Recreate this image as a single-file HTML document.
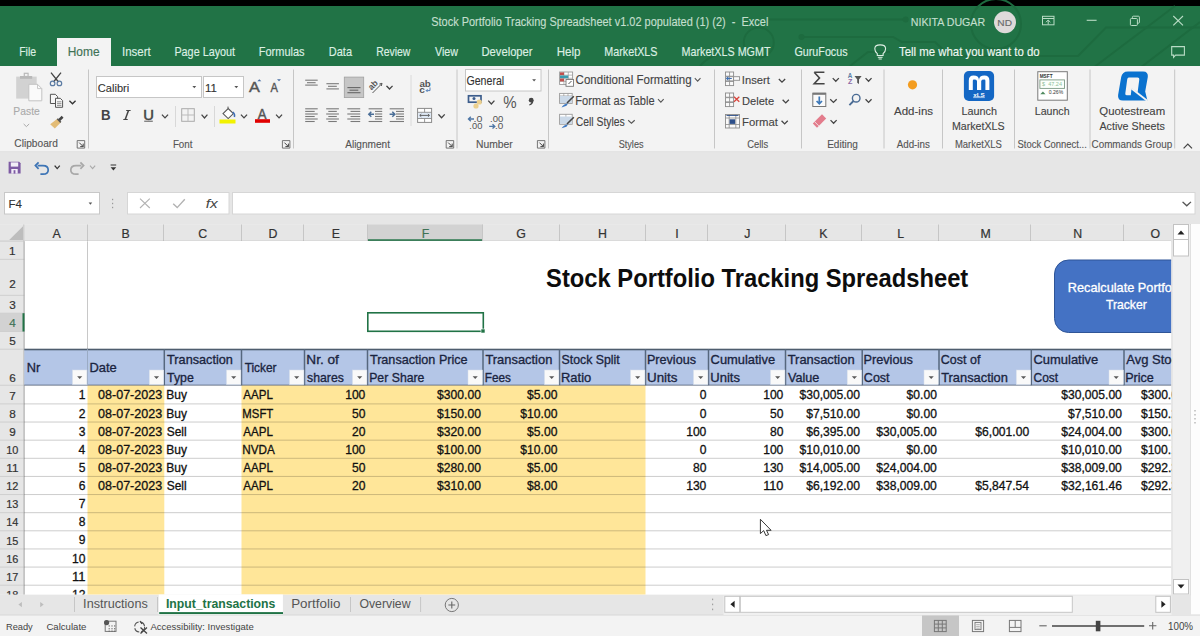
<!DOCTYPE html>
<html><head><meta charset="utf-8"><title>Excel</title>
<style>
html,body{margin:0;padding:0;width:1200px;height:636px;overflow:hidden;background:#f3f3f3}
svg{position:absolute;left:0;top:0;display:block}
text{font-family:"Liberation Sans",sans-serif;white-space:pre}
</style></head><body>
<svg width="1200" height="636" viewBox="0 0 1200 636">
<rect x="0" y="0" width="1200" height="6" fill="#000"/>
<rect x="0" y="6" width="1200" height="60" fill="#217346"/>
<g stroke="#1d6b3f" stroke-width="2" fill="none">
<path d="M769 19.6 H903" fill="none" stroke="#1d6b3f" stroke-width="2"/>
<path d="M803 36.9 H893 L902 42 H935 L950 56 H1040" fill="none" stroke="#1d6b3f" stroke-width="2"/>
<path d="M1040 56 H1078 L1106 27.6 H1200" fill="none" stroke="#1d6b3f" stroke-width="2"/>
<path d="M1093 68 L1175 6" fill="none" stroke="#1d6b3f" stroke-width="2"/>
<path d="M1140 68 L1200 22" fill="none" stroke="#1d6b3f" stroke-width="2"/>
<path d="M700 66 Q712 52 735 52" fill="none" stroke="#1d6b3f" stroke-width="2"/>
<path d="M850 66 L868 52 H890" fill="none" stroke="#1d6b3f" stroke-width="2"/>
<circle cx="758.75" cy="42.5" r="15"/>
<circle cx="996" cy="24" r="25"/>
</g>
<circle cx="905.6" cy="19.6" r="3" fill="#1d6b3f"/>
<circle cx="801.5" cy="36.9" r="3" fill="#1d6b3f"/>
<rect x="57" y="38" width="54" height="28" fill="#f3f3f3"/>
<rect x="0" y="66" width="1200" height="86" fill="#f3f3f3"/>
<rect x="0" y="151.5" width="1200" height="1" fill="#d5d5d5"/>
<rect x="0" y="152.5" width="1200" height="72" fill="#e6e6e6"/>
<rect x="4.5" y="192.5" width="95" height="21.5" fill="#fff" stroke="#c8c8c8" stroke-width="1"/>
<rect x="127.5" y="192.5" width="101.5" height="21.5" fill="#fff" stroke="#d6d6d6" stroke-width="1"/>
<rect x="232.5" y="192.5" width="962.5" height="21.5" fill="#fff" stroke="#d6d6d6" stroke-width="1"/>
<rect x="1190.5" y="224" width="9.5" height="391" fill="#fdfdfd"/>
<line x1="1190.5" y1="224" x2="1190.5" y2="615" stroke="#d0d0d0" stroke-width="1"/>
<rect x="0" y="594.5" width="1190.5" height="20.5" fill="#e6e6e6"/>
<rect x="0" y="615" width="1200" height="21" fill="#f3f3f3"/>
<line x1="0" y1="615" x2="1200" y2="615" stroke="#d8d8d8" stroke-width="1"/>
<rect x="0" y="224.5" width="1171.5" height="16.80000000000001" fill="#e6e6e6"/>
<rect x="367.5" y="224.5" width="115.5" height="16.80000000000001" fill="#d2d2d2"/>
<rect x="367.5" y="239.3" width="115.5" height="2" fill="#217346"/>
<line x1="87.5" y1="224.5" x2="87.5" y2="241.3" stroke="#c6c6c6" stroke-width="1"/>
<line x1="163.5" y1="224.5" x2="163.5" y2="241.3" stroke="#c6c6c6" stroke-width="1"/>
<line x1="241.5" y1="224.5" x2="241.5" y2="241.3" stroke="#c6c6c6" stroke-width="1"/>
<line x1="303.5" y1="224.5" x2="303.5" y2="241.3" stroke="#c6c6c6" stroke-width="1"/>
<line x1="367.5" y1="224.5" x2="367.5" y2="241.3" stroke="#c6c6c6" stroke-width="1"/>
<line x1="482.5" y1="224.5" x2="482.5" y2="241.3" stroke="#c6c6c6" stroke-width="1"/>
<line x1="559.5" y1="224.5" x2="559.5" y2="241.3" stroke="#c6c6c6" stroke-width="1"/>
<line x1="645.5" y1="224.5" x2="645.5" y2="241.3" stroke="#c6c6c6" stroke-width="1"/>
<line x1="707.5" y1="224.5" x2="707.5" y2="241.3" stroke="#c6c6c6" stroke-width="1"/>
<line x1="785.5" y1="224.5" x2="785.5" y2="241.3" stroke="#c6c6c6" stroke-width="1"/>
<line x1="861.5" y1="224.5" x2="861.5" y2="241.3" stroke="#c6c6c6" stroke-width="1"/>
<line x1="938.5" y1="224.5" x2="938.5" y2="241.3" stroke="#c6c6c6" stroke-width="1"/>
<line x1="1030.5" y1="224.5" x2="1030.5" y2="241.3" stroke="#c6c6c6" stroke-width="1"/>
<line x1="1123.5" y1="224.5" x2="1123.5" y2="241.3" stroke="#c6c6c6" stroke-width="1"/>
<rect x="0" y="240.8" width="1171.5" height="1.1" fill="#ababab"/>
<path d="M23 226.2 L23 240 L9.2 240 Z" fill="#bdbdbd" stroke="none" stroke-width="1"/>
<line x1="23.8" y1="224.5" x2="23.8" y2="241.3" stroke="#c6c6c6" stroke-width="1"/>
<rect x="0" y="241.3" width="24.3" height="353.2" fill="#e6e6e6"/>
<rect x="24.3" y="241" width="1147.2" height="353.5" fill="#ffffff"/>
<rect x="0" y="313.2" width="24.3" height="18.30000000000001" fill="#d2d2d2"/>
<rect x="0" y="258.8" width="24.3" height="1" fill="#cfcfcf"/>
<rect x="0" y="294.8" width="24.3" height="1" fill="#cfcfcf"/>
<rect x="0" y="312.7" width="24.3" height="1" fill="#cfcfcf"/>
<rect x="0" y="331.0" width="24.3" height="1" fill="#cfcfcf"/>
<rect x="0" y="348.7" width="24.3" height="1" fill="#cfcfcf"/>
<rect x="0" y="384.75" width="24.3" height="1" fill="#cfcfcf"/>
<rect x="0" y="403.4" width="24.3" height="1" fill="#cfcfcf"/>
<rect x="0" y="421.53" width="24.3" height="1" fill="#cfcfcf"/>
<rect x="0" y="439.65999999999997" width="24.3" height="1" fill="#cfcfcf"/>
<rect x="0" y="457.78999999999996" width="24.3" height="1" fill="#cfcfcf"/>
<rect x="0" y="475.91999999999996" width="24.3" height="1" fill="#cfcfcf"/>
<rect x="0" y="494.04999999999995" width="24.3" height="1" fill="#cfcfcf"/>
<rect x="0" y="512.18" width="24.3" height="1" fill="#cfcfcf"/>
<rect x="0" y="530.31" width="24.3" height="1" fill="#cfcfcf"/>
<rect x="0" y="548.4399999999999" width="24.3" height="1" fill="#cfcfcf"/>
<rect x="0" y="566.5699999999999" width="24.3" height="1" fill="#cfcfcf"/>
<rect x="0" y="584.6999999999999" width="24.3" height="1" fill="#cfcfcf"/>
<rect x="23.6" y="241.3" width="1" height="353.2" fill="#a3a3a3"/>
<rect x="22.5" y="313.2" width="2" height="18.30000000000001" fill="#217346"/>
<line x1="87.5" y1="241.3" x2="87.5" y2="349.2" stroke="#c8c8c8" stroke-width="1"/>
<rect x="24.3" y="349.2" width="1147.2" height="36.05000000000001" fill="#b4c6e7"/>
<rect x="87.5" y="385.25" width="76.80000000000001" height="209.25" fill="#ffe699"/>
<rect x="241.5" y="385.25" width="404.0" height="209.25" fill="#ffe699"/>
<rect x="24.3" y="403.4" width="1147.2" height="1" fill="rgba(0,0,0,0.2)"/>
<rect x="24.3" y="421.53" width="1147.2" height="1" fill="rgba(0,0,0,0.2)"/>
<rect x="24.3" y="439.65999999999997" width="1147.2" height="1" fill="rgba(0,0,0,0.2)"/>
<rect x="24.3" y="457.78999999999996" width="1147.2" height="1" fill="rgba(0,0,0,0.2)"/>
<rect x="24.3" y="475.91999999999996" width="1147.2" height="1" fill="rgba(0,0,0,0.2)"/>
<rect x="24.3" y="494.04999999999995" width="1147.2" height="1" fill="rgba(0,0,0,0.2)"/>
<rect x="24.3" y="512.18" width="1147.2" height="1" fill="rgba(0,0,0,0.2)"/>
<rect x="24.3" y="530.31" width="1147.2" height="1" fill="rgba(0,0,0,0.2)"/>
<rect x="24.3" y="548.4399999999999" width="1147.2" height="1" fill="rgba(0,0,0,0.2)"/>
<rect x="24.3" y="566.5699999999999" width="1147.2" height="1" fill="rgba(0,0,0,0.2)"/>
<rect x="24.3" y="584.6999999999999" width="1147.2" height="1" fill="rgba(0,0,0,0.2)"/>
<rect x="24.3" y="384.55" width="1147.2" height="1.2" fill="rgba(60,70,90,0.55)"/>
<rect x="24.3" y="348.7" width="1147.2" height="1.6" fill="#4e5d6e"/>
<line x1="87.5" y1="349.2" x2="87.5" y2="385.25" stroke="#9aabc4" stroke-width="1.0"/>
<line x1="164.3" y1="349.2" x2="164.3" y2="385.25" stroke="#56677e" stroke-width="1.5"/>
<line x1="241.5" y1="349.2" x2="241.5" y2="385.25" stroke="#56677e" stroke-width="1.5"/>
<line x1="304.5" y1="349.2" x2="304.5" y2="385.25" stroke="#56677e" stroke-width="1.5"/>
<line x1="367.5" y1="349.2" x2="367.5" y2="385.25" stroke="#56677e" stroke-width="1.5"/>
<line x1="483" y1="349.2" x2="483" y2="385.25" stroke="#56677e" stroke-width="1.5"/>
<line x1="559.5" y1="349.2" x2="559.5" y2="385.25" stroke="#56677e" stroke-width="1.5"/>
<line x1="645.5" y1="349.2" x2="645.5" y2="385.25" stroke="#56677e" stroke-width="1.5"/>
<line x1="708.5" y1="349.2" x2="708.5" y2="385.25" stroke="#56677e" stroke-width="1.5"/>
<line x1="785.5" y1="349.2" x2="785.5" y2="385.25" stroke="#56677e" stroke-width="1.5"/>
<line x1="862.2" y1="349.2" x2="862.2" y2="385.25" stroke="#56677e" stroke-width="1.5"/>
<line x1="939" y1="349.2" x2="939" y2="385.25" stroke="#56677e" stroke-width="1.5"/>
<line x1="1031.3" y1="349.2" x2="1031.3" y2="385.25" stroke="#56677e" stroke-width="1.5"/>
<line x1="1124" y1="349.2" x2="1124" y2="385.25" stroke="#56677e" stroke-width="1.5"/>
<rect x="72.5" y="370" width="14.4" height="14.5" fill="#f9f9f9" stroke="#d5dde9" stroke-width="0.5"/>
<path d="M77.10000000000001 376.2 L82.3 376.2 L79.7 379 Z" fill="#595959" stroke="none" stroke-width="1"/>
<rect x="149.3" y="370" width="14.4" height="14.5" fill="#f9f9f9" stroke="#d5dde9" stroke-width="0.5"/>
<path d="M153.9 376.2 L159.1 376.2 L156.5 379 Z" fill="#595959" stroke="none" stroke-width="1"/>
<rect x="226.5" y="370" width="14.4" height="14.5" fill="#f9f9f9" stroke="#d5dde9" stroke-width="0.5"/>
<path d="M231.1 376.2 L236.29999999999998 376.2 L233.7 379 Z" fill="#595959" stroke="none" stroke-width="1"/>
<rect x="289.5" y="370" width="14.4" height="14.5" fill="#f9f9f9" stroke="#d5dde9" stroke-width="0.5"/>
<path d="M294.09999999999997 376.2 L299.3 376.2 L296.7 379 Z" fill="#595959" stroke="none" stroke-width="1"/>
<rect x="352.5" y="370" width="14.4" height="14.5" fill="#f9f9f9" stroke="#d5dde9" stroke-width="0.5"/>
<path d="M357.09999999999997 376.2 L362.3 376.2 L359.7 379 Z" fill="#595959" stroke="none" stroke-width="1"/>
<rect x="468.0" y="370" width="14.4" height="14.5" fill="#f9f9f9" stroke="#d5dde9" stroke-width="0.5"/>
<path d="M472.59999999999997 376.2 L477.8 376.2 L475.2 379 Z" fill="#595959" stroke="none" stroke-width="1"/>
<rect x="544.5" y="370" width="14.4" height="14.5" fill="#f9f9f9" stroke="#d5dde9" stroke-width="0.5"/>
<path d="M549.1 376.2 L554.3000000000001 376.2 L551.7 379 Z" fill="#595959" stroke="none" stroke-width="1"/>
<rect x="630.5" y="370" width="14.4" height="14.5" fill="#f9f9f9" stroke="#d5dde9" stroke-width="0.5"/>
<path d="M635.1 376.2 L640.3000000000001 376.2 L637.7 379 Z" fill="#595959" stroke="none" stroke-width="1"/>
<rect x="693.5" y="370" width="14.4" height="14.5" fill="#f9f9f9" stroke="#d5dde9" stroke-width="0.5"/>
<path d="M698.1 376.2 L703.3000000000001 376.2 L700.7 379 Z" fill="#595959" stroke="none" stroke-width="1"/>
<rect x="770.5" y="370" width="14.4" height="14.5" fill="#f9f9f9" stroke="#d5dde9" stroke-width="0.5"/>
<path d="M775.1 376.2 L780.3000000000001 376.2 L777.7 379 Z" fill="#595959" stroke="none" stroke-width="1"/>
<rect x="847.2" y="370" width="14.4" height="14.5" fill="#f9f9f9" stroke="#d5dde9" stroke-width="0.5"/>
<path d="M851.8000000000001 376.2 L857.0000000000001 376.2 L854.4000000000001 379 Z" fill="#595959" stroke="none" stroke-width="1"/>
<rect x="924.0" y="370" width="14.4" height="14.5" fill="#f9f9f9" stroke="#d5dde9" stroke-width="0.5"/>
<path d="M928.6 376.2 L933.8000000000001 376.2 L931.2 379 Z" fill="#595959" stroke="none" stroke-width="1"/>
<rect x="1016.3000000000001" y="370" width="14.4" height="14.5" fill="#f9f9f9" stroke="#d5dde9" stroke-width="0.5"/>
<path d="M1020.9000000000001 376.2 L1026.1000000000001 376.2 L1023.5000000000001 379 Z" fill="#595959" stroke="none" stroke-width="1"/>
<rect x="1109.0" y="370" width="14.4" height="14.5" fill="#f9f9f9" stroke="#d5dde9" stroke-width="0.5"/>
<path d="M1113.6000000000001 376.2 L1118.8 376.2 L1116.2 379 Z" fill="#595959" stroke="none" stroke-width="1"/>
<rect x="367.8" y="312.8" width="115.5" height="18.5" fill="none" stroke="#217346" stroke-width="1.6"/>
<rect x="481" y="329" width="4" height="4" fill="#217346" stroke="#fff" stroke-width="0.6"/>
<clipPath id="gclip"><rect x="24.3" y="241" width="1147.2" height="353.5"/></clipPath>
<g clip-path="url(#gclip)">
<rect x="1054.5" y="260" width="150" height="72.5" rx="14" ry="14" fill="#4472c4" stroke="#2f5597" stroke-width="1"/>
</g>
<rect x="1171.5" y="224.5" width="19.0" height="370.0" fill="#f0f0f0"/>
<line x1="1172.0" y1="224.5" x2="1172.0" y2="594.5" stroke="#dcdcdc" stroke-width="1"/>
<rect x="1173.5" y="224.5" width="15" height="15" fill="#fff" stroke="#c2c2c2" stroke-width="1"/>
<path d="M1177.5 234.5 L1184.5 234.5 L1181 230.5 Z" fill="#222" stroke="none" stroke-width="1"/>
<rect x="1173.5" y="239.5" width="15" height="16.5" fill="#fff" stroke="#c2c2c2" stroke-width="1"/>
<rect x="1173.5" y="579.5" width="15" height="14.5" fill="#fff" stroke="#c2c2c2" stroke-width="1"/>
<path d="M1177.5 584.5 L1184.5 584.5 L1181 588.5 Z" fill="#222" stroke="none" stroke-width="1"/>
<rect x="1194.5" y="410" width="1" height="1.5" fill="#9a9a9a"/>
<rect x="1194.5" y="414" width="1" height="1.5" fill="#9a9a9a"/>
<rect x="1194.5" y="418" width="1" height="1.5" fill="#9a9a9a"/>
<rect x="1194.5" y="422" width="1" height="1.5" fill="#9a9a9a"/>
<rect x="1042.5" y="16.3" width="11.5" height="8.5" fill="none" stroke="#b9dcc5" stroke-width="1"/>
<line x1="1042.5" y1="18.5" x2="1054" y2="18.5" stroke="#b9dcc5" stroke-width="1"/>
<path d="M1048.2 24.5 V20 M1046 22.2 L1048.2 20 L1050.4 22.2" fill="none" stroke="#b9dcc5" stroke-width="1"/>
<line x1="1086.7" y1="20.3" x2="1096.6" y2="20.3" stroke="#b9dcc5" stroke-width="1.1"/>
<rect x="1130.4" y="18.5" width="7" height="7" fill="none" stroke="#b9dcc5" stroke-width="1" rx="1"/>
<path d="M1132.4 18.5 V17.2 Q1132.4 16.2 1133.4 16.2 H1138.4 Q1139.4 16.2 1139.4 17.2 V22.2 Q1139.4 23.2 1138.4 23.2 H1137.4" fill="none" stroke="#b9dcc5" stroke-width="1"/>
<path d="M1173.3 16 L1183 25.3 M1183 16 L1173.3 25.3" fill="none" stroke="#b9dcc5" stroke-width="1.1"/>
<path d="M877.3 55.5 V53.7 Q874.8 51.5 874.8 48.7 Q874.8 44.9 880.2 44.9 Q885.6 44.9 885.6 48.7 Q885.6 51.5 883.1 53.7 V55.5 Z" fill="none" stroke="#dff0e5" stroke-width="1.1"/>
<line x1="877.8" y1="57.3" x2="882.6" y2="57.3" stroke="#dff0e5" stroke-width="1"/>
<line x1="878.6" y1="59" x2="881.8" y2="59" stroke="#dff0e5" stroke-width="1"/>
<path d="M1171.7 46.6 H1184.4 V55.1 H1175.6 L1173.6 57.3 V55.1 H1171.7 Z" fill="none" stroke="#b9dcc5" stroke-width="1.1"/>
<rect x="16.2" y="76.6" width="20.5" height="22" fill="#d2d2d2"/>
<rect x="20" y="76" width="12.2" height="2.8" fill="#b9b9b9"/>
<rect x="24.3" y="73.3" width="3.8" height="3.2" fill="none" stroke="#b9b9b9" stroke-width="1.2"/>
<path d="M28.8 84.3 H37.5 L41.8 88.6 V100.8 H28.8 Z" fill="#fafafa" stroke="#c4c4c4" stroke-width="1"/>
<path d="M37.5 84.3 V88.6 H41.8" fill="none" stroke="#c4c4c4" stroke-width="0.9"/>
<path d="M24 124.3 L26.4 126.6 L28.8 124.3" fill="none" stroke="#aaa" stroke-width="1" stroke-linecap="square"/>
<path d="M51 72.6 L58.5 82 M61 72.6 L53.5 82" fill="none" stroke="#444" stroke-width="1.3"/>
<circle cx="52.6" cy="83.4" r="2.3" fill="none" stroke="#5b7ba3" stroke-width="1.2"/>
<circle cx="59.4" cy="83.4" r="2.3" fill="none" stroke="#5b7ba3" stroke-width="1.2"/>
<path d="M50.4 94.3 H55.3 L57.6 96.6 V103.5 H50.4 Z" fill="#f6f6f6" stroke="#555" stroke-width="1"/>
<path d="M55.5 98.3 H60.3 L62.6 100.6 V107.3 H55.5 Z" fill="#f6f6f6" stroke="#555" stroke-width="1"/>
<line x1="57" y1="101.8" x2="61.4" y2="101.8" stroke="#777" stroke-width="0.8"/>
<line x1="57" y1="103.6" x2="61.4" y2="103.6" stroke="#777" stroke-width="0.8"/>
<line x1="57" y1="105.4" x2="61.4" y2="105.4" stroke="#777" stroke-width="0.8"/>
<path d="M69.9 101.2 L72.5 103.8 L75.1 101.2" fill="none" stroke="#333" stroke-width="1.3" stroke-linecap="square"/>
<path d="M58.8 120.5 L62.6 116.8" fill="none" stroke="#444" stroke-width="2.6"/>
<path d="M57.3 118.8 L60.8 122.4 L54.8 128.6 L50.2 124.2 Z" fill="#e3bc76" stroke="none" stroke-width="1"/>
<path d="M57.3 118.8 L60.8 122.4" fill="none" stroke="#555" stroke-width="1.6"/>
<path d="M77.2 140.6 H84.7 V148.1 H77.2 Z" fill="none" stroke="#666" stroke-width="0.9"/>
<path d="M79.2 142.6 L83.2 146.6 M83.2 143.6 V146.6 H80.2" fill="none" stroke="#444" stroke-width="1"/>
<path d="M282.4 140.6 H289.9 V148.1 H282.4 Z" fill="none" stroke="#666" stroke-width="0.9"/>
<path d="M284.4 142.6 L288.4 146.6 M288.4 143.6 V146.6 H285.4" fill="none" stroke="#444" stroke-width="1"/>
<path d="M446.2 140.6 H453.7 V148.1 H446.2 Z" fill="none" stroke="#666" stroke-width="0.9"/>
<path d="M448.2 142.6 L452.2 146.6 M452.2 143.6 V146.6 H449.2" fill="none" stroke="#444" stroke-width="1"/>
<path d="M537.4 140.6 H544.9 V148.1 H537.4 Z" fill="none" stroke="#666" stroke-width="0.9"/>
<path d="M539.4 142.6 L543.4 146.6 M543.4 143.6 V146.6 H540.4" fill="none" stroke="#444" stroke-width="1"/>
<line x1="88.5" y1="69.5" x2="88.5" y2="148.5" stroke="#c6c6c6" stroke-width="1"/>
<line x1="293.5" y1="69.5" x2="293.5" y2="148.5" stroke="#c6c6c6" stroke-width="1"/>
<line x1="457" y1="69.5" x2="457" y2="148.5" stroke="#c6c6c6" stroke-width="1"/>
<line x1="548.5" y1="69.5" x2="548.5" y2="148.5" stroke="#c6c6c6" stroke-width="1"/>
<line x1="714.5" y1="69.5" x2="714.5" y2="148.5" stroke="#c6c6c6" stroke-width="1"/>
<line x1="801.5" y1="69.5" x2="801.5" y2="148.5" stroke="#c6c6c6" stroke-width="1"/>
<line x1="884" y1="69.5" x2="884" y2="148.5" stroke="#c6c6c6" stroke-width="1"/>
<line x1="942.5" y1="69.5" x2="942.5" y2="148.5" stroke="#c6c6c6" stroke-width="1"/>
<line x1="1014.5" y1="69.5" x2="1014.5" y2="148.5" stroke="#c6c6c6" stroke-width="1"/>
<line x1="1090" y1="69.5" x2="1090" y2="148.5" stroke="#c6c6c6" stroke-width="1"/>
<line x1="1174.7" y1="69.5" x2="1174.7" y2="148.5" stroke="#c6c6c6" stroke-width="1"/>
<path d="M1183.6 148.3 L1187.8 144 L1192 148.3" fill="none" stroke="#444" stroke-width="1.2"/>
<rect x="96.5" y="76.5" width="105" height="21" fill="#fff" stroke="#c6c6c6" stroke-width="1"/>
<rect x="203.5" y="76.5" width="40" height="21" fill="#fff" stroke="#c6c6c6" stroke-width="1"/>
<path d="M192.4 86 L196.2 86 L194.3 88.2 Z" fill="#555" stroke="none" stroke-width="1"/>
<path d="M234.4 86 L238.2 86 L236.3 88.2 Z" fill="#555" stroke="none" stroke-width="1"/>
<text x="248.97" y="92.10" font-size="15.26" textLength="10.86" lengthAdjust="spacingAndGlyphs" fill="#555" stroke="#555" stroke-width="0.45">A</text>
<path d="M257.3 81.2 L259.3 79.2 L261.3 81.2 Z" fill="#4a6fa5" stroke="none" stroke-width="1"/>
<text x="270.58" y="92.10" font-size="12.50" textLength="7.44" lengthAdjust="spacingAndGlyphs" fill="#555" stroke="#555" stroke-width="0.4">A</text>
<path d="M277 79.3 L281 79.3 L279 81.3 Z" fill="#4a6fa5" stroke="none" stroke-width="1"/>
<text x="101.11" y="119.90" font-size="14.39" textLength="9.59" lengthAdjust="spacingAndGlyphs" fill="#444" font-weight="bold">B</text>
<path d="M125.2 119.5 L128.5 110.5" fill="none" stroke="#444" stroke-width="1.5"/>
<path d="M126.2 110.5 H130.6 M123.3 119.5 H127.7" fill="none" stroke="#444" stroke-width="1.1"/>
<text x="143.16" y="119.60" font-size="13.95" textLength="10.68" lengthAdjust="spacingAndGlyphs" fill="#444" stroke="#444" stroke-width="0.5">U</text>
<line x1="144.2" y1="121.2" x2="152.8" y2="121.2" stroke="#555" stroke-width="1"/>
<path d="M162.4 115.1 L165.0 117.9 L167.6 115.1" fill="none" stroke="#444" stroke-width="1.3" stroke-linecap="square"/>
<line x1="214.5" y1="106" x2="214.5" y2="127" stroke="#d8d8d8" stroke-width="1"/>
<line x1="175.5" y1="106" x2="175.5" y2="127" stroke="#d8d8d8" stroke-width="1"/>
<rect x="181.7" y="108.7" width="12.6" height="12.6" fill="none" stroke="#aaa" stroke-width="1"/>
<line x1="188" y1="108.7" x2="188" y2="121.3" stroke="#bbb" stroke-width="1"/>
<line x1="181.7" y1="115" x2="194.3" y2="115" stroke="#bbb" stroke-width="1"/>
<path d="M202 115.1 L204.5 117.9 L207 115.1" fill="none" stroke="#444" stroke-width="1.3" stroke-linecap="square"/>
<path d="M223 113.6 L228.2 108.6 L233.4 113.6 L228.2 118.6 Z" fill="#fff" stroke="#555" stroke-width="1.1"/>
<path d="M228 108.5 V106.6" fill="none" stroke="#555" stroke-width="1"/>
<path d="M232.8 112 Q235.2 114 234.4 117" fill="none" stroke="#3f6fb5" stroke-width="1.5"/>
<rect x="219.5" y="119.5" width="16" height="4" fill="#f2f200"/>
<path d="M241.4 115.1 L244.0 117.9 L246.6 115.1" fill="none" stroke="#444" stroke-width="1.3" stroke-linecap="square"/>
<text x="257.77" y="119.00" font-size="14.53" textLength="8.75" lengthAdjust="spacingAndGlyphs" fill="#555" stroke="#555" stroke-width="0.45">A</text>
<rect x="255" y="119.2" width="15" height="3.6" fill="#e00000"/>
<path d="M276.5 115.1 L279.05 117.9 L281.6 115.1" fill="none" stroke="#444" stroke-width="1.3" stroke-linecap="square"/>
<line x1="305.2" y1="80.2" x2="317.7" y2="80.2" stroke="#7a7a7a" stroke-width="1.1"/>
<line x1="307" y1="82.7" x2="315.6" y2="82.7" stroke="#7a7a7a" stroke-width="1.1"/>
<line x1="305.2" y1="85.1" x2="317.7" y2="85.1" stroke="#7a7a7a" stroke-width="1.1"/>
<line x1="326.4" y1="83.7" x2="338.9" y2="83.7" stroke="#7a7a7a" stroke-width="1.1"/>
<line x1="328" y1="86.3" x2="336.8" y2="86.3" stroke="#7a7a7a" stroke-width="1.1"/>
<line x1="326.4" y1="88.9" x2="338.9" y2="88.9" stroke="#7a7a7a" stroke-width="1.1"/>
<rect x="344.3" y="77.1" width="19.4" height="20.5" fill="#c6c6c6" stroke="#a0a0a0" stroke-width="0.8"/>
<line x1="347.4" y1="87.6" x2="360.5" y2="87.6" stroke="#666" stroke-width="1.1"/>
<line x1="349.5" y1="90.2" x2="358.3" y2="90.2" stroke="#666" stroke-width="1.1"/>
<line x1="347.4" y1="92.7" x2="360.5" y2="92.7" stroke="#666" stroke-width="1.1"/>
<text x="0" y="0" font-size="8.5" fill="#555" font-weight="bold" transform="translate(371.5 90.5) rotate(-45)">ab</text>
<path d="M372.5 93 L381.7 83.8" fill="none" stroke="#555" stroke-width="1"/>
<path d="M379.4 84 L382 83.3 L381.3 86" fill="none" stroke="#555" stroke-width="1"/>
<path d="M386.9 86.3 L389.5 89 L392.1 86.3" fill="none" stroke="#444" stroke-width="1.3" stroke-linecap="square"/>
<line x1="411" y1="75" x2="411" y2="126" stroke="#dadada" stroke-width="1"/>
<line x1="305.2" y1="108.8" x2="317.7" y2="108.8" stroke="#7a7a7a" stroke-width="1.1"/>
<line x1="326.2" y1="108.8" x2="338.9" y2="108.8" stroke="#7a7a7a" stroke-width="1.1"/>
<line x1="347.3" y1="108.8" x2="360.2" y2="108.8" stroke="#7a7a7a" stroke-width="1.1"/>
<line x1="305.2" y1="111.4" x2="314.7" y2="111.4" stroke="#7a7a7a" stroke-width="1.1"/>
<line x1="328.3" y1="111.4" x2="336.8" y2="111.4" stroke="#7a7a7a" stroke-width="1.1"/>
<line x1="350.5" y1="111.4" x2="360.2" y2="111.4" stroke="#7a7a7a" stroke-width="1.1"/>
<line x1="305.2" y1="114" x2="317.7" y2="114" stroke="#7a7a7a" stroke-width="1.1"/>
<line x1="326.2" y1="114" x2="338.9" y2="114" stroke="#7a7a7a" stroke-width="1.1"/>
<line x1="347.3" y1="114" x2="360.2" y2="114" stroke="#7a7a7a" stroke-width="1.1"/>
<line x1="305.2" y1="116.5" x2="314.7" y2="116.5" stroke="#7a7a7a" stroke-width="1.1"/>
<line x1="328.3" y1="116.5" x2="336.8" y2="116.5" stroke="#7a7a7a" stroke-width="1.1"/>
<line x1="350.5" y1="116.5" x2="360.2" y2="116.5" stroke="#7a7a7a" stroke-width="1.1"/>
<line x1="305.2" y1="119" x2="317.7" y2="119" stroke="#7a7a7a" stroke-width="1.1"/>
<line x1="326.2" y1="119" x2="338.9" y2="119" stroke="#7a7a7a" stroke-width="1.1"/>
<line x1="347.3" y1="119" x2="360.2" y2="119" stroke="#7a7a7a" stroke-width="1.1"/>
<line x1="305.2" y1="121.5" x2="314.7" y2="121.5" stroke="#7a7a7a" stroke-width="1.1"/>
<line x1="328.3" y1="121.5" x2="336.8" y2="121.5" stroke="#7a7a7a" stroke-width="1.1"/>
<line x1="350.5" y1="121.5" x2="360.2" y2="121.5" stroke="#7a7a7a" stroke-width="1.1"/>
<line x1="368.6" y1="108.8" x2="382.2" y2="108.8" stroke="#7a7a7a" stroke-width="1.1"/>
<line x1="368.6" y1="121.5" x2="382.2" y2="121.5" stroke="#7a7a7a" stroke-width="1.1"/>
<line x1="375" y1="111.4" x2="382.2" y2="111.4" stroke="#7a7a7a" stroke-width="1.1"/>
<line x1="375" y1="114" x2="382.2" y2="114" stroke="#7a7a7a" stroke-width="1.1"/>
<line x1="375" y1="116.5" x2="382.2" y2="116.5" stroke="#7a7a7a" stroke-width="1.1"/>
<line x1="375" y1="119" x2="382.2" y2="119" stroke="#7a7a7a" stroke-width="1.1"/>
<path d="M374 114.2 H368.8 M371.3 111.7 L368.8 114.2 L371.3 116.7" fill="none" stroke="#4a6e97" stroke-width="1.5"/>
<line x1="389.7" y1="108.8" x2="404" y2="108.8" stroke="#7a7a7a" stroke-width="1.1"/>
<line x1="389.7" y1="121.5" x2="404" y2="121.5" stroke="#7a7a7a" stroke-width="1.1"/>
<line x1="396" y1="111.4" x2="404" y2="111.4" stroke="#7a7a7a" stroke-width="1.1"/>
<line x1="396" y1="114" x2="404" y2="114" stroke="#7a7a7a" stroke-width="1.1"/>
<line x1="396" y1="116.5" x2="404" y2="116.5" stroke="#7a7a7a" stroke-width="1.1"/>
<line x1="396" y1="119" x2="404" y2="119" stroke="#7a7a7a" stroke-width="1.1"/>
<path d="M389.6 114.2 H394.8 M392.3 111.7 L394.8 114.2 L392.3 116.7" fill="none" stroke="#4a6e97" stroke-width="1.5"/>
<text x="419.41" y="86.50" font-size="8.20" textLength="11.39" lengthAdjust="spacingAndGlyphs" fill="#555" font-weight="bold">ab</text>
<text x="419.31" y="92.60" font-size="8.20" textLength="5.59" lengthAdjust="spacingAndGlyphs" fill="#555" font-weight="bold">c</text>
<path d="M430 87.5 V90.6 H426.2 M427.6 89.2 L426.2 90.6 L427.6 92" fill="none" stroke="#4a78b5" stroke-width="0.9"/>
<rect x="417.6" y="108.4" width="14" height="14" fill="#fff" stroke="#8a8a8a" stroke-width="1"/>
<rect x="418.2" y="112.4" width="12.8" height="6" fill="#dfe9f5"/>
<line x1="417.6" y1="112.3" x2="431.6" y2="112.3" stroke="#8a8a8a" stroke-width="0.9"/>
<line x1="417.6" y1="118.5" x2="431.6" y2="118.5" stroke="#8a8a8a" stroke-width="0.9"/>
<line x1="424.6" y1="108.4" x2="424.6" y2="112.3" stroke="#8a8a8a" stroke-width="0.9"/>
<line x1="424.6" y1="118.5" x2="424.6" y2="122.4" stroke="#8a8a8a" stroke-width="0.9"/>
<path d="M419.8 115.4 H429.4 M421.3 114 L419.8 115.4 L421.3 116.8 M427.9 114 L429.4 115.4 L427.9 116.8" fill="none" stroke="#555" stroke-width="0.9"/>
<path d="M438.8 114.8 L441.55 117.8 L444.3 114.8" fill="none" stroke="#444" stroke-width="1.3" stroke-linecap="square"/>
<rect x="465.5" y="69.5" width="75.5" height="21.5" fill="#fff" stroke="#c6c6c6" stroke-width="1"/>
<path d="M532.2 79.2 L536 79.2 L534.1 81.4 Z" fill="#555" stroke="none" stroke-width="1"/>
<rect x="468.5" y="95.8" width="12.5" height="6.4" fill="none" stroke="#3d5d8c" stroke-width="1.7"/>
<circle cx="474" cy="98.4" r="1.5" fill="#3d5d8c"/>
<circle cx="479.3" cy="102" r="2.6" fill="#ecd08f"/>
<circle cx="476" cy="106" r="2.6" fill="#ecd08f"/>
<path d="M488.7 101.1 L491.35 104 L494 101.1" fill="none" stroke="#444" stroke-width="1.3" stroke-linecap="square"/>
<text x="503.16" y="107.70" font-size="16.86" textLength="13.37" lengthAdjust="spacingAndGlyphs" fill="#555">%</text>
<circle cx="531.2" cy="100.2" r="2.4" fill="#444"/>
<path d="M533.3 100.2 Q533.8 104 529.4 105.6 L529.2 104.6 Q531.6 103.4 531.6 101.2 Z" fill="#444" stroke="none" stroke-width="1"/>
<text x="473.53" y="121.60" font-size="8.60" textLength="8.89" lengthAdjust="spacingAndGlyphs" fill="#555">.0</text>
<text x="469.34" y="129.40" font-size="8.60" textLength="13.02" lengthAdjust="spacingAndGlyphs" fill="#555">.00</text>
<path d="M474 119 H468.5 M470.8 116.8 L468.5 119 L470.8 121.2" fill="none" stroke="#4f77a6" stroke-width="1.4"/>
<text x="490.13" y="121.60" font-size="8.60" textLength="13.24" lengthAdjust="spacingAndGlyphs" fill="#555">.00</text>
<text x="495.09" y="129.40" font-size="8.60" textLength="8.30" lengthAdjust="spacingAndGlyphs" fill="#555">.0</text>
<path d="M489.2 126.4 H494.8 M492.5 124.2 L494.8 126.4 L492.5 128.6" fill="none" stroke="#4f77a6" stroke-width="1.4"/>
<rect x="559.6" y="72" width="13" height="12.5" fill="#fff" stroke="#9a9a9a" stroke-width="0.9"/>
<line x1="563.9333333333334" y1="72" x2="563.9333333333334" y2="84.5" stroke="#9a9a9a" stroke-width="0.7"/>
<line x1="568.2666666666667" y1="72" x2="568.2666666666667" y2="84.5" stroke="#9a9a9a" stroke-width="0.7"/>
<line x1="559.6" y1="75.125" x2="572.6" y2="75.125" stroke="#9a9a9a" stroke-width="0.7"/>
<line x1="559.6" y1="78.25" x2="572.6" y2="78.25" stroke="#9a9a9a" stroke-width="0.7"/>
<line x1="559.6" y1="81.375" x2="572.6" y2="81.375" stroke="#9a9a9a" stroke-width="0.7"/>
<rect x="560" y="72.4" width="4" height="2.8" fill="#c0504d"/>
<rect x="560" y="75.5" width="8.3" height="2.7" fill="#3a9bb0"/>
<rect x="560" y="78.6" width="4" height="2.8" fill="#c0504d"/>
<rect x="566" y="79.5" width="7.5" height="6.8" fill="#fff" stroke="#777" stroke-width="0.9"/>
<path d="M568.5 84 L571.5 81" fill="none" stroke="#555" stroke-width="1"/>
<rect x="559.6" y="93.4" width="12.6" height="10" fill="#fff" stroke="#9a9a9a" stroke-width="0.9"/>
<line x1="563.8000000000001" y1="93.4" x2="563.8000000000001" y2="103.4" stroke="#9a9a9a" stroke-width="0.7"/>
<line x1="568.0" y1="93.4" x2="568.0" y2="103.4" stroke="#9a9a9a" stroke-width="0.7"/>
<line x1="559.6" y1="95.9" x2="572.2" y2="95.9" stroke="#9a9a9a" stroke-width="0.7"/>
<line x1="559.6" y1="98.4" x2="572.2" y2="98.4" stroke="#9a9a9a" stroke-width="0.7"/>
<line x1="559.6" y1="100.9" x2="572.2" y2="100.9" stroke="#9a9a9a" stroke-width="0.7"/>
<rect x="560" y="96" width="11.8" height="7" fill="#cbd9e8"/>
<path d="M567 103 L573.8 96.3" fill="none" stroke="#444" stroke-width="1.6"/>
<path d="M561.5 107.5 Q564 103.5 568 103.5 L566.5 105.8 Z" fill="#3f79c2" stroke="none" stroke-width="1"/>
<rect x="559.6" y="114.3" width="12.6" height="10" fill="#fff" stroke="#9a9a9a" stroke-width="0.9"/>
<line x1="565.9" y1="114.3" x2="565.9" y2="124.3" stroke="#9a9a9a" stroke-width="0.7"/>
<line x1="559.6" y1="119.3" x2="572.2" y2="119.3" stroke="#9a9a9a" stroke-width="0.7"/>
<rect x="560" y="116.5" width="11.8" height="7.4" fill="#cbd9e8"/>
<path d="M567 124 L573.8 117.3" fill="none" stroke="#444" stroke-width="1.6"/>
<path d="M561.5 128.3 Q564 124.5 568 124.5 L566.5 126.8 Z" fill="#3f79c2" stroke="none" stroke-width="1"/>
<path d="M695.2 78.6 L697.6500000000001 81.2 L700.1 78.6" fill="none" stroke="#555" stroke-width="1.1" stroke-linecap="square"/>
<path d="M658.4 99.6 L660.8499999999999 102.2 L663.3 99.6" fill="none" stroke="#555" stroke-width="1.1" stroke-linecap="square"/>
<path d="M628.6 120.6 L631.45 123.2 L634.3 120.6" fill="none" stroke="#555" stroke-width="1.1" stroke-linecap="square"/>
<rect x="725.5" y="72.0" width="8.1" height="4.2" fill="#fafafa" stroke="#8c8c8c" stroke-width="0.9"/>
<line x1="729.55" y1="72.0" x2="729.55" y2="76.2" stroke="#8c8c8c" stroke-width="0.8"/>
<rect x="725.5" y="76.7" width="8.1" height="4.2" fill="#fafafa" stroke="#8c8c8c" stroke-width="0.9"/>
<line x1="729.55" y1="76.7" x2="729.55" y2="80.9" stroke="#8c8c8c" stroke-width="0.8"/>
<rect x="725.5" y="81.4" width="8.1" height="4.2" fill="#fafafa" stroke="#8c8c8c" stroke-width="0.9"/>
<line x1="729.55" y1="81.4" x2="729.55" y2="85.60000000000001" stroke="#8c8c8c" stroke-width="0.8"/>
<rect x="733.6" y="76.7" width="6" height="3.6" fill="#fafafa" stroke="#8c8c8c" stroke-width="0.9"/>
<path d="M731.8 78.5 H726.6 M728.4 76.9 L726.6 78.5 L728.4 80.1" fill="none" stroke="#3f6fb0" stroke-width="1.1"/>
<path d="M779.3 79.5 L782.0 82.2 L784.7 79.5" fill="none" stroke="#444" stroke-width="1.3" stroke-linecap="square"/>
<rect x="725.5" y="93.0" width="8.1" height="4.2" fill="#fafafa" stroke="#8c8c8c" stroke-width="0.9"/>
<line x1="729.55" y1="93.0" x2="729.55" y2="97.2" stroke="#8c8c8c" stroke-width="0.8"/>
<rect x="725.5" y="97.7" width="8.1" height="4.2" fill="#fafafa" stroke="#8c8c8c" stroke-width="0.9"/>
<line x1="729.55" y1="97.7" x2="729.55" y2="101.9" stroke="#8c8c8c" stroke-width="0.8"/>
<rect x="725.5" y="102.4" width="8.1" height="4.2" fill="#fafafa" stroke="#8c8c8c" stroke-width="0.9"/>
<line x1="729.55" y1="102.4" x2="729.55" y2="106.60000000000001" stroke="#8c8c8c" stroke-width="0.8"/>
<path d="M734 96.8 L739.3 101.8 M739.3 96.8 L734 101.8" fill="none" stroke="#d9443c" stroke-width="1.3"/>
<path d="M783.1 100.2 L785.75 102.9 L788.4 100.2" fill="none" stroke="#444" stroke-width="1.3" stroke-linecap="square"/>
<rect x="725.5" y="114.5" width="14" height="13.5" fill="#fafafa" stroke="#8c8c8c" stroke-width="0.9"/>
<line x1="729.2" y1="114.5" x2="729.2" y2="128" stroke="#8c8c8c" stroke-width="0.8"/>
<line x1="735.8" y1="114.5" x2="735.8" y2="128" stroke="#8c8c8c" stroke-width="0.8"/>
<line x1="725.5" y1="118" x2="739.5" y2="118" stroke="#8c8c8c" stroke-width="0.8"/>
<line x1="725.5" y1="124.5" x2="739.5" y2="124.5" stroke="#8c8c8c" stroke-width="0.8"/>
<rect x="729.6" y="119.3" width="5.5" height="4.6" fill="#2d4f8a"/>
<path d="M726.5 115.5 H738.5" fill="none" stroke="#2d4f8a" stroke-width="0.9"/>
<path d="M782 121.2 L784.65 123.9 L787.3 121.2" fill="none" stroke="#444" stroke-width="1.3" stroke-linecap="square"/>
<path d="M814.2 72.3 H824.4 M814.2 72.3 L819.5 78 L814.2 83.8 H824.6" fill="none" stroke="#444" stroke-width="1.6"/>
<path d="M833.2 78.6 L835.8 81.3 L838.4 78.6" fill="none" stroke="#444" stroke-width="1.3" stroke-linecap="square"/>
<text x="847.84" y="78.20" font-size="6.69" textLength="4.52" lengthAdjust="spacingAndGlyphs" fill="#5b7fa6" font-weight="bold">A</text>
<text x="847.98" y="84.20" font-size="6.98" textLength="4.42" lengthAdjust="spacingAndGlyphs" fill="#8e6aa6" font-weight="bold">Z</text>
<path d="M854.5 76 H861.6 L859 79.6 V84 L857.2 82.8 V79.6 Z" fill="#555" stroke="none" stroke-width="1"/>
<path d="M866 78.6 L868.55 81.3 L871.1 78.6" fill="none" stroke="#444" stroke-width="1.3" stroke-linecap="square"/>
<rect x="812.8" y="93.2" width="13" height="13.3" fill="#fafafa" stroke="#777" stroke-width="1"/>
<rect x="812.8" y="92.8" width="13" height="2" fill="#777"/>
<path d="M819.3 96.5 V103.6 M816.6 101 L819.3 103.8 L822 101" fill="none" stroke="#3d78b8" stroke-width="1.7"/>
<path d="M830.7 99.7 L833.45 102.4 L836.2 99.7" fill="none" stroke="#444" stroke-width="1.3" stroke-linecap="square"/>
<circle cx="856.2" cy="98.2" r="3.8" fill="none" stroke="#4a6b94" stroke-width="1.4"/>
<path d="M853.5 101 L849.4 105.2" fill="none" stroke="#4a6b94" stroke-width="1.8"/>
<path d="M866 99.7 L868.55 102.4 L871.1 99.7" fill="none" stroke="#444" stroke-width="1.3" stroke-linecap="square"/>
<path d="M826.2 118.5 L822 114.3 L812.8 123.5 L817 127.7 Z" fill="#e37c8c" stroke="none" stroke-width="1" stroke="#e37c8c" stroke-width="0.8" stroke-linejoin="round"/>
<path d="M814.6 121.7 L818.8 125.9" fill="none" stroke="#f3f3f3" stroke-width="0.8"/>
<path d="M831 120.6 L833.6 123.3 L836.2 120.6" fill="none" stroke="#444" stroke-width="1.3" stroke-linecap="square"/>
<circle cx="912.5" cy="84.8" r="4.6" fill="#f39c1f"/>
<rect x="963.9" y="71.1" width="30.2" height="29.8" rx="5" fill="#1467c4"/>
<path d="M968.8 90 V80.5 Q968.8 75.6 973.6 75.6 Q978.8 75.6 979 80 Q979.2 75.6 984.4 75.6 Q989.4 75.6 989.4 80.5 V90 H985.4 V80.8 Q985.4 79.6 984.2 79.6 Q981.4 79.6 981.2 81 V90 H977 V81 Q976.8 79.6 974 79.6 Q972.8 79.6 972.8 80.8 V90 Z" fill="#fff" stroke="none" stroke-width="1"/>
<text x="973.2" y="96.8" font-size="5.6" fill="#fff" font-weight="bold" textLength="11.5" lengthAdjust="spacingAndGlyphs">xLS</text>
<line x1="973.2" y1="97.6" x2="984.8" y2="97.6" stroke="#fff" stroke-width="0.6"/>
<rect x="1037.8" y="71.7" width="29.5" height="28.5" fill="#fff" stroke="#7a7a7a" stroke-width="1"/>
<text x="1039.68" y="77.80" font-size="5.00" textLength="12.87" lengthAdjust="spacingAndGlyphs" fill="#333" font-weight="bold">MSFT</text>
<rect x="1039.9" y="79.9" width="24.6" height="8.5" fill="#fbfffb" stroke="#7d9a85" stroke-width="0.9"/>
<text x="1042" y="86.4" font-size="6" fill="#8fbf9a" textLength="20" lengthAdjust="spacingAndGlyphs">$  47.24</text>
<path d="M1040.3 94.2 L1042.9 91.4 L1045.5 94.2 Z" fill="#4e8a5e" stroke="none" stroke-width="1"/>
<text x="1048.80" y="94.30" font-size="5.20" textLength="14.38" lengthAdjust="spacingAndGlyphs" fill="#333">0.26%</text>
<path d="M1128 71.4 H1143 Q1148.5 71.4 1147.8 77 L1145.2 91.5 L1147.4 100.6 H1123 Q1117.4 100.6 1118.1 95 L1121.2 77 Q1122.2 71.4 1128 71.4 Z M1128.8 77.6 H1137.6 Q1139.6 77.6 1139.3 79.6 L1137.6 92.6 L1131.6 88 L1130.8 95.2 H1126.6 Q1125 95.2 1125.3 93.4 L1127.2 79.4 Q1127.5 77.6 1128.8 77.6 Z" fill="#0a72cf" stroke="none" stroke-width="1" fill-rule="evenodd"/>
<path d="M1131.2 88.2 L1147.2 100.8" fill="none" stroke="#f3f3f3" stroke-width="1.8"/>
<path d="M8.6 161.8 H19.2 L20.6 163.2 V173.6 H8.6 Z" fill="#7d5aa3" stroke="none" stroke-width="1"/>
<rect x="10.8" y="162.4" width="7.4" height="4.2" fill="#f2eef7"/>
<rect x="11.3" y="169" width="6.4" height="4.6" fill="#f2eef7"/>
<rect x="13.6" y="170.2" width="1.8" height="3.4" fill="#7d5aa3"/>
<path d="M37.6 165.6 H43 Q48.2 165.6 48.2 170 Q48.2 174.2 43 174.2 H40.4 M38.6 162.4 L35.4 165.6 L38.6 168.8" fill="none" stroke="#3d74b5" stroke-width="1.7"/>
<path d="M55 166 L57.2 168.6 L59.4 166" fill="none" stroke="#333" stroke-width="1.2" stroke-linecap="square"/>
<path d="M81.4 165.6 H76 Q70.8 165.6 70.8 170 Q70.8 174.2 76 174.2 H78.6 M80.4 162.4 L83.6 165.6 L80.4 168.8" fill="none" stroke="#a8a8a8" stroke-width="1.7"/>
<path d="M90.4 166 L92.6 168.6 L94.8 166" fill="none" stroke="#aaa" stroke-width="1.1" stroke-linecap="square"/>
<line x1="110.6" y1="165" x2="116.2" y2="165" stroke="#333" stroke-width="1"/>
<path d="M110.6 167.2 H116.2 L113.4 170.4 Z" fill="#333" stroke="none" stroke-width="1"/>
<path d="M88.6 202.6 L92.2 202.6 L90.4 204.8 Z" fill="#555" stroke="none" stroke-width="1"/>
<rect x="112" y="198.8" width="1.2" height="1.4" fill="#9a9a9a"/>
<rect x="112" y="202.8" width="1.2" height="1.4" fill="#9a9a9a"/>
<rect x="112" y="206.8" width="1.2" height="1.4" fill="#9a9a9a"/>
<path d="M140 198.6 L149.8 208 M149.8 198.6 L140 208" fill="none" stroke="#b2b2b2" stroke-width="1.1"/>
<path d="M173.2 203.8 L177.2 207.6 L184.8 199.2" fill="none" stroke="#b2b2b2" stroke-width="1.4"/>
<text x="205.8" y="207.6" font-size="13" font-family="Liberation Serif" font-style="italic" fill="#444" textLength="12" lengthAdjust="spacingAndGlyphs">fx</text>
<path d="M1183 202.3 L1186.75 205.8 L1190.5 202.3" fill="none" stroke="#555" stroke-width="1.3" stroke-linecap="square"/>
<path d="M21.9 602 L18.4 604.6 L21.9 607.3 Z" fill="#bdbdbd" stroke="none" stroke-width="1"/>
<path d="M40.2 602 L43.7 604.6 L40.2 607.3 Z" fill="#bdbdbd" stroke="none" stroke-width="1"/>
<line x1="74.5" y1="597" x2="74.5" y2="612" stroke="#c6c6c6" stroke-width="1"/>
<line x1="157.5" y1="597" x2="157.5" y2="612" stroke="#c6c6c6" stroke-width="1"/>
<rect x="158.7" y="594.5" width="124.2" height="20.3" fill="#ffffff"/>
<rect x="159.2" y="612.1" width="123.8" height="2" fill="#217346"/>
<line x1="350.5" y1="597" x2="350.5" y2="612" stroke="#c6c6c6" stroke-width="1"/>
<line x1="420.6" y1="597" x2="420.6" y2="612" stroke="#c6c6c6" stroke-width="1"/>
<circle cx="451.8" cy="605" r="6.6" fill="none" stroke="#777" stroke-width="1"/>
<path d="M451.8 601.6 V608.4 M448.4 605 H455.2" fill="none" stroke="#666" stroke-width="1.1"/>
<rect x="712" y="598.6" width="1.2" height="1.6" fill="#a0a0a0"/>
<rect x="712" y="603.6" width="1.2" height="1.6" fill="#a0a0a0"/>
<rect x="712" y="608.6" width="1.2" height="1.6" fill="#a0a0a0"/>
<rect x="723.5" y="595.5" width="467" height="19.5" fill="#f0f0f0"/>
<rect x="724.8" y="596.3" width="15" height="16" fill="#fff" stroke="#c2c2c2" stroke-width="1"/>
<path d="M734.6 600.8 V607.8 L730.4 604.3 Z" fill="#222" stroke="none" stroke-width="1"/>
<rect x="740.3" y="596.3" width="332" height="16" fill="#fff" stroke="#c6c6c6" stroke-width="1"/>
<rect x="1155.8" y="596.3" width="14.6" height="16" fill="#fff" stroke="#c2c2c2" stroke-width="1"/>
<path d="M1161.4 600.8 V607.8 L1165.6 604.3 Z" fill="#222" stroke="none" stroke-width="1"/>
<rect x="1171.5" y="594.5" width="19" height="20.5" fill="#e6e6e6"/>
<rect x="105.2" y="621.2" width="10.8" height="10.2" fill="none" stroke="#777" stroke-width="1"/>
<circle cx="106.6" cy="622.6" r="2.6" fill="#555"/>
<rect x="108.6" y="625.4" width="1.2" height="1.1" fill="#666"/>
<rect x="108.6" y="628.2" width="1.2" height="1.1" fill="#666"/>
<rect x="108.6" y="630.6" width="1.2" height="1.1" fill="#666"/>
<rect x="111.4" y="625.4" width="1.2" height="1.1" fill="#666"/>
<rect x="111.4" y="628.2" width="1.2" height="1.1" fill="#666"/>
<rect x="111.4" y="630.6" width="1.2" height="1.1" fill="#666"/>
<rect x="114" y="625.4" width="1.2" height="1.1" fill="#666"/>
<rect x="114" y="628.2" width="1.2" height="1.1" fill="#666"/>
<rect x="114" y="630.6" width="1.2" height="1.1" fill="#666"/>
<circle cx="139.6" cy="627" r="5" fill="none" stroke="#555" stroke-width="1.1" stroke-dasharray="6 2"/>
<path d="M140 621 L142 624 M140.5 627.5 L147 633.5 M147 627.5 L140.5 633.5" fill="none" stroke="#444" stroke-width="1.3"/>
<rect x="922" y="615.5" width="37" height="20.5" fill="#c6c6c6"/>
<rect x="934.4" y="620.4" width="11.8" height="11.2" fill="none" stroke="#777" stroke-width="1"/>
<line x1="938.3" y1="620.4" x2="938.3" y2="631.6" stroke="#777" stroke-width="1"/>
<line x1="942.3" y1="620.4" x2="942.3" y2="631.6" stroke="#777" stroke-width="1"/>
<line x1="934.4" y1="624.1" x2="946.2" y2="624.1" stroke="#777" stroke-width="1"/>
<line x1="934.4" y1="627.9" x2="946.2" y2="627.9" stroke="#777" stroke-width="1"/>
<rect x="972.4" y="620.4" width="11.2" height="11.2" fill="none" stroke="#777" stroke-width="1"/>
<rect x="975" y="622.4" width="6" height="7.2" fill="none" stroke="#777" stroke-width="0.9"/>
<line x1="976.2" y1="624.6" x2="979.8" y2="624.6" stroke="#999" stroke-width="0.7"/>
<line x1="976.2" y1="626.4" x2="979.8" y2="626.4" stroke="#999" stroke-width="0.7"/>
<line x1="976.2" y1="628.2" x2="979.8" y2="628.2" stroke="#999" stroke-width="0.7"/>
<rect x="1009.4" y="620.4" width="11.6" height="11.2" fill="none" stroke="#777" stroke-width="1"/>
<line x1="1009.4" y1="627.4" x2="1021" y2="627.4" stroke="#777" stroke-width="1"/>
<line x1="1015.2" y1="620.4" x2="1015.2" y2="627.4" stroke="#777" stroke-width="1"/>
<line x1="1039.3" y1="625.8" x2="1046.7" y2="625.8" stroke="#666" stroke-width="1.1"/>
<line x1="1052" y1="626" x2="1144.2" y2="626" stroke="#444" stroke-width="1.3"/>
<rect x="1095.8" y="620.8" width="4.6" height="10.5" fill="#444"/>
<path d="M1149 625.8 H1156.4 M1152.7 622.1 V629.5" fill="none" stroke="#666" stroke-width="1.1"/>
<text x="431.20" y="26.00" font-size="12.65" textLength="337.13" lengthAdjust="spacingAndGlyphs" fill="#c3dfcd" stroke="#c3dfcd" stroke-width="0.15">Stock Portfolio Tracking Spreadsheet v1.02 populated (1) (2)  -  Excel</text>
<text x="910.84" y="26.00" font-size="11.19" textLength="74.34" lengthAdjust="spacingAndGlyphs" fill="#c3dfcd" stroke="#c3dfcd" stroke-width="0.15">NIKITA DUGAR</text>
<circle cx="1005" cy="22.3" r="11" fill="#dedada"/>
<text x="997.37" y="25.70" font-size="9.59" textLength="14.61" lengthAdjust="spacingAndGlyphs" fill="#6a6a6a" stroke="#6a6a6a" stroke-width="0.15">ND</text>
<text x="19.14" y="55.60" font-size="11.92" textLength="16.93" lengthAdjust="spacingAndGlyphs" fill="#dcefe3" stroke="#dcefe3" stroke-width="0.15">File</text>
<text x="121.94" y="55.60" font-size="11.92" textLength="28.74" lengthAdjust="spacingAndGlyphs" fill="#dcefe3" stroke="#dcefe3" stroke-width="0.15">Insert</text>
<text x="174.41" y="55.60" font-size="11.92" textLength="60.67" lengthAdjust="spacingAndGlyphs" fill="#dcefe3" stroke="#dcefe3" stroke-width="0.15">Page Layout</text>
<text x="258.80" y="55.60" font-size="11.92" textLength="45.80" lengthAdjust="spacingAndGlyphs" fill="#dcefe3" stroke="#dcefe3" stroke-width="0.15">Formulas</text>
<text x="328.80" y="55.60" font-size="11.92" textLength="23.20" lengthAdjust="spacingAndGlyphs" fill="#dcefe3" stroke="#dcefe3" stroke-width="0.15">Data</text>
<text x="376.14" y="55.60" font-size="11.92" textLength="34.23" lengthAdjust="spacingAndGlyphs" fill="#dcefe3" stroke="#dcefe3" stroke-width="0.15">Review</text>
<text x="434.95" y="55.60" font-size="11.92" textLength="23.02" lengthAdjust="spacingAndGlyphs" fill="#dcefe3" stroke="#dcefe3" stroke-width="0.15">View</text>
<text x="481.48" y="55.60" font-size="11.92" textLength="51.11" lengthAdjust="spacingAndGlyphs" fill="#dcefe3" stroke="#dcefe3" stroke-width="0.15">Developer</text>
<text x="556.65" y="55.60" font-size="11.92" textLength="23.84" lengthAdjust="spacingAndGlyphs" fill="#dcefe3" stroke="#dcefe3" stroke-width="0.15">Help</text>
<text x="604.22" y="55.60" font-size="11.92" textLength="53.28" lengthAdjust="spacingAndGlyphs" fill="#dcefe3" stroke="#dcefe3" stroke-width="0.15">MarketXLS</text>
<text x="681.52" y="55.60" font-size="11.92" textLength="88.93" lengthAdjust="spacingAndGlyphs" fill="#dcefe3" stroke="#dcefe3" stroke-width="0.15">MarketXLS MGMT</text>
<text x="794.46" y="55.60" font-size="11.92" textLength="53.13" lengthAdjust="spacingAndGlyphs" fill="#dcefe3" stroke="#dcefe3" stroke-width="0.15">GuruFocus</text>
<text x="67.77" y="55.60" font-size="11.92" textLength="31.76" lengthAdjust="spacingAndGlyphs" fill="#3f7256" stroke="#3f7256" stroke-width="0.15">Home</text>
<text x="898.95" y="55.50" font-size="12.06" textLength="140.73" lengthAdjust="spacingAndGlyphs" fill="#eef7f1" stroke="#eef7f1" stroke-width="0.15">Tell me what you want to do</text>
<text x="13.35" y="114.90" font-size="10.61" textLength="26.41" lengthAdjust="spacingAndGlyphs" fill="#aaaaaa" stroke="#aaaaaa" stroke-width="0.12">Paste</text>
<text x="14.38" y="147.30" font-size="10.03" textLength="43.47" lengthAdjust="spacingAndGlyphs" fill="#555" stroke="#555" stroke-width="0.12">Clipboard</text>
<text x="97.84" y="91.60" font-size="11.77" textLength="31.41" lengthAdjust="spacingAndGlyphs" fill="#333" stroke="#333" stroke-width="0.12">Calibri</text>
<text x="205.09" y="91.60" font-size="11.77" textLength="11.83" lengthAdjust="spacingAndGlyphs" fill="#333" stroke="#333" stroke-width="0.12">11</text>
<text x="172.90" y="148.10" font-size="10.03" textLength="19.57" lengthAdjust="spacingAndGlyphs" fill="#555" stroke="#555" stroke-width="0.12">Font</text>
<text x="345.18" y="147.90" font-size="10.03" textLength="44.79" lengthAdjust="spacingAndGlyphs" fill="#555" stroke="#555" stroke-width="0.12">Alignment</text>
<text x="466.47" y="84.80" font-size="12.06" textLength="37.74" lengthAdjust="spacingAndGlyphs" fill="#333" stroke="#333" stroke-width="0.12">General</text>
<text x="476.05" y="147.90" font-size="10.03" textLength="36.72" lengthAdjust="spacingAndGlyphs" fill="#555" stroke="#555" stroke-width="0.12">Number</text>
<text x="575.61" y="84.40" font-size="12.50" textLength="116.03" lengthAdjust="spacingAndGlyphs" fill="#444" stroke="#444" stroke-width="0.12">Conditional Formatting</text>
<text x="575.31" y="105.00" font-size="12.50" textLength="79.28" lengthAdjust="spacingAndGlyphs" fill="#444" stroke="#444" stroke-width="0.12">Format as Table</text>
<text x="575.67" y="125.90" font-size="12.06" textLength="49.10" lengthAdjust="spacingAndGlyphs" fill="#444" stroke="#444" stroke-width="0.12">Cell Styles</text>
<text x="618.69" y="148.00" font-size="10.03" textLength="24.84" lengthAdjust="spacingAndGlyphs" fill="#555" stroke="#555" stroke-width="0.12">Styles</text>
<text x="741.87" y="84.20" font-size="11.34" textLength="28.02" lengthAdjust="spacingAndGlyphs" fill="#444" stroke="#444" stroke-width="0.12">Insert</text>
<text x="741.99" y="104.60" font-size="11.34" textLength="32.10" lengthAdjust="spacingAndGlyphs" fill="#444" stroke="#444" stroke-width="0.12">Delete</text>
<text x="741.97" y="125.60" font-size="11.63" textLength="35.91" lengthAdjust="spacingAndGlyphs" fill="#444" stroke="#444" stroke-width="0.12">Format</text>
<text x="747.22" y="148.00" font-size="10.03" textLength="20.92" lengthAdjust="spacingAndGlyphs" fill="#555" stroke="#555" stroke-width="0.12">Cells</text>
<text x="827.18" y="148.00" font-size="10.03" textLength="30.67" lengthAdjust="spacingAndGlyphs" fill="#555" stroke="#555" stroke-width="0.12">Editing</text>
<text x="894.08" y="114.50" font-size="11.05" textLength="38.94" lengthAdjust="spacingAndGlyphs" fill="#444" stroke="#444" stroke-width="0.12">Add-ins</text>
<text x="896.68" y="147.80" font-size="10.03" textLength="33.17" lengthAdjust="spacingAndGlyphs" fill="#555" stroke="#555" stroke-width="0.12">Add-ins</text>
<text x="961.41" y="114.50" font-size="11.05" textLength="35.59" lengthAdjust="spacingAndGlyphs" fill="#444" stroke="#444" stroke-width="0.12">Launch</text>
<text x="951.92" y="129.60" font-size="11.05" textLength="52.76" lengthAdjust="spacingAndGlyphs" fill="#444" stroke="#444" stroke-width="0.12">MarketXLS</text>
<text x="954.92" y="147.80" font-size="10.03" textLength="46.91" lengthAdjust="spacingAndGlyphs" fill="#555" stroke="#555" stroke-width="0.12">MarketXLS</text>
<text x="1034.73" y="114.60" font-size="11.05" textLength="34.86" lengthAdjust="spacingAndGlyphs" fill="#444" stroke="#444" stroke-width="0.12">Launch</text>
<text x="1017.47" y="147.90" font-size="10.03" textLength="69.39" lengthAdjust="spacingAndGlyphs" fill="#555" stroke="#555" stroke-width="0.12">Stock Connect...</text>
<text x="1099.36" y="115.10" font-size="11.05" textLength="65.79" lengthAdjust="spacingAndGlyphs" fill="#444" stroke="#444" stroke-width="0.12">Quotestream</text>
<text x="1099.48" y="129.70" font-size="11.05" textLength="65.31" lengthAdjust="spacingAndGlyphs" fill="#444" stroke="#444" stroke-width="0.12">Active Sheets</text>
<text x="1091.50" y="147.90" font-size="10.03" textLength="80.72" lengthAdjust="spacingAndGlyphs" fill="#555" stroke="#555" stroke-width="0.12">Commands Group</text>
<text x="8.46" y="207.90" font-size="11.48" textLength="13.38" lengthAdjust="spacingAndGlyphs" fill="#333" stroke="#333" stroke-width="0.12">F4</text>
<text x="52.53" y="237.80" font-size="12.35" textLength="8.24" lengthAdjust="spacingAndGlyphs" fill="#333" stroke="#333" stroke-width="0.2">A</text>
<text x="121.57" y="237.80" font-size="12.35" textLength="8.24" lengthAdjust="spacingAndGlyphs" fill="#333" stroke="#333" stroke-width="0.2">B</text>
<text x="198.34" y="237.80" font-size="12.35" textLength="8.92" lengthAdjust="spacingAndGlyphs" fill="#333" stroke="#333" stroke-width="0.2">C</text>
<text x="268.58" y="237.80" font-size="12.35" textLength="8.92" lengthAdjust="spacingAndGlyphs" fill="#333" stroke="#333" stroke-width="0.2">D</text>
<text x="331.76" y="237.80" font-size="12.35" textLength="8.24" lengthAdjust="spacingAndGlyphs" fill="#333" stroke="#333" stroke-width="0.2">E</text>
<text x="421.84" y="237.80" font-size="12.35" textLength="7.55" lengthAdjust="spacingAndGlyphs" fill="#3f7256" stroke="#3f7256" stroke-width="0.2">F</text>
<text x="516.22" y="237.80" font-size="12.35" textLength="9.61" lengthAdjust="spacingAndGlyphs" fill="#333" stroke="#333" stroke-width="0.2">G</text>
<text x="598.04" y="237.80" font-size="12.35" textLength="8.92" lengthAdjust="spacingAndGlyphs" fill="#333" stroke="#333" stroke-width="0.2">H</text>
<text x="675.28" y="237.80" font-size="12.35" textLength="3.43" lengthAdjust="spacingAndGlyphs" fill="#333" stroke="#333" stroke-width="0.2">I</text>
<text x="744.15" y="237.80" font-size="12.35" textLength="6.18" lengthAdjust="spacingAndGlyphs" fill="#333" stroke="#333" stroke-width="0.2">J</text>
<text x="819.19" y="237.80" font-size="12.35" textLength="8.24" lengthAdjust="spacingAndGlyphs" fill="#333" stroke="#333" stroke-width="0.2">K</text>
<text x="897.31" y="237.80" font-size="12.35" textLength="6.87" lengthAdjust="spacingAndGlyphs" fill="#333" stroke="#333" stroke-width="0.2">L</text>
<text x="980.40" y="237.80" font-size="12.35" textLength="10.29" lengthAdjust="spacingAndGlyphs" fill="#333" stroke="#333" stroke-width="0.2">M</text>
<text x="1073.24" y="237.80" font-size="12.35" textLength="8.92" lengthAdjust="spacingAndGlyphs" fill="#333" stroke="#333" stroke-width="0.2">N</text>
<text x="1150.60" y="237.80" font-size="12.35" textLength="9.61" lengthAdjust="spacingAndGlyphs" fill="#333" stroke="#333" stroke-width="0.2">O</text>
<clipPath id="rclip"><rect x="0" y="241" width="24.3" height="353.5"/></clipPath><g clip-path="url(#rclip)">
<text x="9.07" y="254.95" font-size="11.75" textLength="6.53" lengthAdjust="spacingAndGlyphs" fill="#333" stroke="#333" stroke-width="0.2">1</text>
<text x="9.23" y="287.60" font-size="11.75" textLength="6.53" lengthAdjust="spacingAndGlyphs" fill="#333" stroke="#333" stroke-width="0.2">2</text>
<text x="9.27" y="308.85" font-size="11.75" textLength="6.53" lengthAdjust="spacingAndGlyphs" fill="#333" stroke="#333" stroke-width="0.2">3</text>
<text x="9.27" y="327.15" font-size="11.75" textLength="6.53" lengthAdjust="spacingAndGlyphs" fill="#3f7256" stroke="#3f7256" stroke-width="0.2">4</text>
<text x="9.24" y="344.85" font-size="11.75" textLength="6.53" lengthAdjust="spacingAndGlyphs" fill="#333" stroke="#333" stroke-width="0.2">5</text>
<text x="9.19" y="381.70" font-size="11.75" textLength="6.53" lengthAdjust="spacingAndGlyphs" fill="#333" stroke="#333" stroke-width="0.2">6</text>
<text x="9.23" y="399.55" font-size="11.75" textLength="6.53" lengthAdjust="spacingAndGlyphs" fill="#333" stroke="#333" stroke-width="0.2">7</text>
<text x="9.23" y="417.68" font-size="11.75" textLength="6.53" lengthAdjust="spacingAndGlyphs" fill="#333" stroke="#333" stroke-width="0.2">8</text>
<text x="9.24" y="435.81" font-size="11.75" textLength="6.53" lengthAdjust="spacingAndGlyphs" fill="#333" stroke="#333" stroke-width="0.2">9</text>
<text x="6.22" y="453.94" font-size="11.75" textLength="12.15" lengthAdjust="spacingAndGlyphs" fill="#333" stroke="#333" stroke-width="0.2">10</text>
<text x="6.27" y="472.07" font-size="11.75" textLength="12.15" lengthAdjust="spacingAndGlyphs" fill="#333" stroke="#333" stroke-width="0.2">11</text>
<text x="6.28" y="490.20" font-size="11.75" textLength="12.15" lengthAdjust="spacingAndGlyphs" fill="#333" stroke="#333" stroke-width="0.2">12</text>
<text x="6.25" y="508.33" font-size="11.75" textLength="12.15" lengthAdjust="spacingAndGlyphs" fill="#333" stroke="#333" stroke-width="0.2">13</text>
<text x="6.17" y="526.46" font-size="11.75" textLength="12.15" lengthAdjust="spacingAndGlyphs" fill="#333" stroke="#333" stroke-width="0.2">14</text>
<text x="6.24" y="544.59" font-size="11.75" textLength="12.15" lengthAdjust="spacingAndGlyphs" fill="#333" stroke="#333" stroke-width="0.2">15</text>
<text x="6.25" y="562.72" font-size="11.75" textLength="12.15" lengthAdjust="spacingAndGlyphs" fill="#333" stroke="#333" stroke-width="0.2">16</text>
<text x="6.28" y="580.85" font-size="11.75" textLength="12.15" lengthAdjust="spacingAndGlyphs" fill="#333" stroke="#333" stroke-width="0.2">17</text>
<text x="6.25" y="598.98" font-size="11.75" textLength="12.15" lengthAdjust="spacingAndGlyphs" fill="#333" stroke="#333" stroke-width="0.2">18</text>
</g>
<g clip-path="url(#gclip)">
<text x="546.12" y="287.00" font-size="25.44" textLength="422.17" lengthAdjust="spacingAndGlyphs" fill="#0d0d0d" font-weight="bold">Stock Portfolio Tracking Spreadsheet</text>
<text x="1067.76" y="292.00" font-size="11.92" textLength="116.78" lengthAdjust="spacingAndGlyphs" fill="#ffffff" stroke="#ffffff" stroke-width="0.3">Recalculate Portfolio</text>
<text x="1105.93" y="309.00" font-size="12.21" textLength="40.77" lengthAdjust="spacingAndGlyphs" fill="#ffffff" stroke="#ffffff" stroke-width="0.3">Tracker</text>
</g>
<text x="26.70" y="372.30" font-size="11.92" textLength="13.51" lengthAdjust="spacingAndGlyphs" fill="#1a2440" stroke="#1a2440" stroke-width="0.3">Nr</text>
<text x="89.54" y="372.30" font-size="11.92" textLength="27.28" lengthAdjust="spacingAndGlyphs" fill="#1a2440" stroke="#1a2440" stroke-width="0.3">Date</text>
<text x="167.07" y="363.75" font-size="11.92" textLength="65.85" lengthAdjust="spacingAndGlyphs" fill="#1a2440" stroke="#1a2440" stroke-width="0.3">Transaction</text>
<text x="167.08" y="381.80" font-size="11.92" textLength="26.70" lengthAdjust="spacingAndGlyphs" fill="#1a2440" stroke="#1a2440" stroke-width="0.3">Type</text>
<text x="244.64" y="372.30" font-size="11.92" textLength="31.96" lengthAdjust="spacingAndGlyphs" fill="#1a2440" stroke="#1a2440" stroke-width="0.3">Ticker</text>
<text x="306.31" y="363.75" font-size="11.92" textLength="32.57" lengthAdjust="spacingAndGlyphs" fill="#1a2440" stroke="#1a2440" stroke-width="0.3">Nr. of</text>
<text x="307.06" y="381.80" font-size="11.92" textLength="36.78" lengthAdjust="spacingAndGlyphs" fill="#1a2440" stroke="#1a2440" stroke-width="0.3">shares</text>
<text x="369.92" y="363.75" font-size="11.92" textLength="97.74" lengthAdjust="spacingAndGlyphs" fill="#1a2440" stroke="#1a2440" stroke-width="0.3">Transaction Price</text>
<text x="369.19" y="381.80" font-size="11.92" textLength="55.25" lengthAdjust="spacingAndGlyphs" fill="#1a2440" stroke="#1a2440" stroke-width="0.3">Per Share</text>
<text x="485.41" y="363.75" font-size="11.92" textLength="66.92" lengthAdjust="spacingAndGlyphs" fill="#1a2440" stroke="#1a2440" stroke-width="0.3">Transaction</text>
<text x="484.74" y="381.80" font-size="11.92" textLength="26.09" lengthAdjust="spacingAndGlyphs" fill="#1a2440" stroke="#1a2440" stroke-width="0.3">Fees</text>
<text x="561.54" y="363.75" font-size="11.92" textLength="58.15" lengthAdjust="spacingAndGlyphs" fill="#1a2440" stroke="#1a2440" stroke-width="0.3">Stock Split</text>
<text x="561.04" y="381.80" font-size="11.92" textLength="30.20" lengthAdjust="spacingAndGlyphs" fill="#1a2440" stroke="#1a2440" stroke-width="0.3">Ratio</text>
<text x="646.97" y="363.75" font-size="11.92" textLength="48.99" lengthAdjust="spacingAndGlyphs" fill="#1a2440" stroke="#1a2440" stroke-width="0.3">Previous</text>
<text x="646.97" y="381.80" font-size="11.92" textLength="30.52" lengthAdjust="spacingAndGlyphs" fill="#1a2440" stroke="#1a2440" stroke-width="0.3">Units</text>
<text x="710.60" y="363.75" font-size="11.92" textLength="64.48" lengthAdjust="spacingAndGlyphs" fill="#1a2440" stroke="#1a2440" stroke-width="0.3">Cumulative</text>
<text x="710.24" y="381.80" font-size="11.92" textLength="29.73" lengthAdjust="spacingAndGlyphs" fill="#1a2440" stroke="#1a2440" stroke-width="0.3">Units</text>
<text x="787.71" y="363.75" font-size="11.92" textLength="66.87" lengthAdjust="spacingAndGlyphs" fill="#1a2440" stroke="#1a2440" stroke-width="0.3">Transaction</text>
<text x="787.95" y="381.80" font-size="11.92" textLength="31.35" lengthAdjust="spacingAndGlyphs" fill="#1a2440" stroke="#1a2440" stroke-width="0.3">Value</text>
<text x="863.46" y="363.75" font-size="11.92" textLength="49.50" lengthAdjust="spacingAndGlyphs" fill="#1a2440" stroke="#1a2440" stroke-width="0.3">Previous</text>
<text x="863.86" y="381.80" font-size="11.92" textLength="25.73" lengthAdjust="spacingAndGlyphs" fill="#1a2440" stroke="#1a2440" stroke-width="0.3">Cost</text>
<text x="940.87" y="363.75" font-size="11.92" textLength="39.52" lengthAdjust="spacingAndGlyphs" fill="#1a2440" stroke="#1a2440" stroke-width="0.3">Cost of</text>
<text x="941.21" y="381.80" font-size="11.92" textLength="66.72" lengthAdjust="spacingAndGlyphs" fill="#1a2440" stroke="#1a2440" stroke-width="0.3">Transaction</text>
<text x="1033.54" y="363.75" font-size="11.92" textLength="64.73" lengthAdjust="spacingAndGlyphs" fill="#1a2440" stroke="#1a2440" stroke-width="0.3">Cumulative</text>
<text x="1033.59" y="381.80" font-size="11.92" textLength="24.60" lengthAdjust="spacingAndGlyphs" fill="#1a2440" stroke="#1a2440" stroke-width="0.3">Cost</text>
<g clip-path="url(#gclip)">
<text x="1126.22" y="363.75" font-size="11.92" textLength="58.26" lengthAdjust="spacingAndGlyphs" fill="#1a2440" stroke="#1a2440" stroke-width="0.3">Avg Stock</text>
<text x="1125.22" y="381.80" font-size="11.92" textLength="28.64" lengthAdjust="spacingAndGlyphs" fill="#1a2440" stroke="#1a2440" stroke-width="0.3">Price</text>
</g>
<g clip-path="url(#gclip)">
<text x="78.76" y="399.40" font-size="12.11" textLength="6.73" lengthAdjust="spacingAndGlyphs" fill="#111" stroke="#111" stroke-width="0.3">1</text>
<text x="98.01" y="399.40" font-size="12.28" textLength="64.24" lengthAdjust="spacingAndGlyphs" fill="#111" stroke="#111" stroke-width="0.3">08-07-2023</text>
<text x="166.31" y="399.40" font-size="12.06" textLength="20.71" lengthAdjust="spacingAndGlyphs" fill="#111" stroke="#111" stroke-width="0.3">Buy</text>
<text x="243.28" y="399.40" font-size="12.06" textLength="29.61" lengthAdjust="spacingAndGlyphs" fill="#111" stroke="#111" stroke-width="0.3">AAPL</text>
<text x="345.17" y="399.40" font-size="12.11" textLength="20.20" lengthAdjust="spacingAndGlyphs" fill="#111" stroke="#111" stroke-width="0.3">100</text>
<text x="437.11" y="399.40" font-size="12.11" textLength="43.76" lengthAdjust="spacingAndGlyphs" fill="#111" stroke="#111" stroke-width="0.3">$300.00</text>
<text x="527.08" y="399.40" font-size="12.11" textLength="30.29" lengthAdjust="spacingAndGlyphs" fill="#111" stroke="#111" stroke-width="0.3">$5.00</text>
<text x="699.64" y="399.40" font-size="12.11" textLength="6.73" lengthAdjust="spacingAndGlyphs" fill="#111" stroke="#111" stroke-width="0.3">0</text>
<text x="763.17" y="399.40" font-size="12.11" textLength="20.20" lengthAdjust="spacingAndGlyphs" fill="#111" stroke="#111" stroke-width="0.3">100</text>
<text x="799.48" y="399.40" font-size="12.11" textLength="60.59" lengthAdjust="spacingAndGlyphs" fill="#111" stroke="#111" stroke-width="0.3">$30,005.00</text>
<text x="906.58" y="399.40" font-size="12.11" textLength="30.29" lengthAdjust="spacingAndGlyphs" fill="#111" stroke="#111" stroke-width="0.3">$0.00</text>
<text x="1061.28" y="399.40" font-size="12.11" textLength="60.59" lengthAdjust="spacingAndGlyphs" fill="#111" stroke="#111" stroke-width="0.3">$30,005.00</text>
<text x="1140.95" y="399.40" font-size="12.11" textLength="43.76" lengthAdjust="spacingAndGlyphs" fill="#111" stroke="#111" stroke-width="0.3">$300.05</text>
<text x="78.78" y="417.53" font-size="12.11" textLength="6.73" lengthAdjust="spacingAndGlyphs" fill="#111" stroke="#111" stroke-width="0.3">2</text>
<text x="98.01" y="417.53" font-size="12.28" textLength="64.24" lengthAdjust="spacingAndGlyphs" fill="#111" stroke="#111" stroke-width="0.3">08-07-2023</text>
<text x="166.31" y="417.53" font-size="12.06" textLength="20.71" lengthAdjust="spacingAndGlyphs" fill="#111" stroke="#111" stroke-width="0.3">Buy</text>
<text x="242.37" y="417.53" font-size="12.06" textLength="30.89" lengthAdjust="spacingAndGlyphs" fill="#111" stroke="#111" stroke-width="0.3">MSFT</text>
<text x="351.91" y="417.53" font-size="12.11" textLength="13.47" lengthAdjust="spacingAndGlyphs" fill="#111" stroke="#111" stroke-width="0.3">50</text>
<text x="437.11" y="417.53" font-size="12.11" textLength="43.76" lengthAdjust="spacingAndGlyphs" fill="#111" stroke="#111" stroke-width="0.3">$150.00</text>
<text x="520.35" y="417.53" font-size="12.11" textLength="37.03" lengthAdjust="spacingAndGlyphs" fill="#111" stroke="#111" stroke-width="0.3">$10.00</text>
<text x="699.64" y="417.53" font-size="12.11" textLength="6.73" lengthAdjust="spacingAndGlyphs" fill="#111" stroke="#111" stroke-width="0.3">0</text>
<text x="769.91" y="417.53" font-size="12.11" textLength="13.47" lengthAdjust="spacingAndGlyphs" fill="#111" stroke="#111" stroke-width="0.3">50</text>
<text x="806.22" y="417.53" font-size="12.11" textLength="53.86" lengthAdjust="spacingAndGlyphs" fill="#111" stroke="#111" stroke-width="0.3">$7,510.00</text>
<text x="906.58" y="417.53" font-size="12.11" textLength="30.29" lengthAdjust="spacingAndGlyphs" fill="#111" stroke="#111" stroke-width="0.3">$0.00</text>
<text x="1068.02" y="417.53" font-size="12.11" textLength="53.86" lengthAdjust="spacingAndGlyphs" fill="#111" stroke="#111" stroke-width="0.3">$7,510.00</text>
<text x="1140.91" y="417.53" font-size="12.11" textLength="43.76" lengthAdjust="spacingAndGlyphs" fill="#111" stroke="#111" stroke-width="0.3">$150.20</text>
<text x="78.70" y="435.66" font-size="12.11" textLength="6.73" lengthAdjust="spacingAndGlyphs" fill="#111" stroke="#111" stroke-width="0.3">3</text>
<text x="98.01" y="435.66" font-size="12.28" textLength="64.24" lengthAdjust="spacingAndGlyphs" fill="#111" stroke="#111" stroke-width="0.3">08-07-2023</text>
<text x="166.76" y="435.66" font-size="12.06" textLength="19.84" lengthAdjust="spacingAndGlyphs" fill="#111" stroke="#111" stroke-width="0.3">Sell</text>
<text x="243.28" y="435.66" font-size="12.06" textLength="29.61" lengthAdjust="spacingAndGlyphs" fill="#111" stroke="#111" stroke-width="0.3">AAPL</text>
<text x="351.91" y="435.66" font-size="12.11" textLength="13.47" lengthAdjust="spacingAndGlyphs" fill="#111" stroke="#111" stroke-width="0.3">20</text>
<text x="437.11" y="435.66" font-size="12.11" textLength="43.76" lengthAdjust="spacingAndGlyphs" fill="#111" stroke="#111" stroke-width="0.3">$320.00</text>
<text x="527.08" y="435.66" font-size="12.11" textLength="30.29" lengthAdjust="spacingAndGlyphs" fill="#111" stroke="#111" stroke-width="0.3">$5.00</text>
<text x="686.17" y="435.66" font-size="12.11" textLength="20.20" lengthAdjust="spacingAndGlyphs" fill="#111" stroke="#111" stroke-width="0.3">100</text>
<text x="769.91" y="435.66" font-size="12.11" textLength="13.47" lengthAdjust="spacingAndGlyphs" fill="#111" stroke="#111" stroke-width="0.3">80</text>
<text x="806.22" y="435.66" font-size="12.11" textLength="53.86" lengthAdjust="spacingAndGlyphs" fill="#111" stroke="#111" stroke-width="0.3">$6,395.00</text>
<text x="876.28" y="435.66" font-size="12.11" textLength="60.59" lengthAdjust="spacingAndGlyphs" fill="#111" stroke="#111" stroke-width="0.3">$30,005.00</text>
<text x="975.32" y="435.66" font-size="12.11" textLength="53.86" lengthAdjust="spacingAndGlyphs" fill="#111" stroke="#111" stroke-width="0.3">$6,001.00</text>
<text x="1061.28" y="435.66" font-size="12.11" textLength="60.59" lengthAdjust="spacingAndGlyphs" fill="#111" stroke="#111" stroke-width="0.3">$24,004.00</text>
<text x="1140.95" y="435.66" font-size="12.11" textLength="43.76" lengthAdjust="spacingAndGlyphs" fill="#111" stroke="#111" stroke-width="0.3">$300.05</text>
<text x="78.52" y="453.79" font-size="12.11" textLength="6.73" lengthAdjust="spacingAndGlyphs" fill="#111" stroke="#111" stroke-width="0.3">4</text>
<text x="98.01" y="453.79" font-size="12.28" textLength="64.24" lengthAdjust="spacingAndGlyphs" fill="#111" stroke="#111" stroke-width="0.3">08-07-2023</text>
<text x="166.31" y="453.79" font-size="12.06" textLength="20.71" lengthAdjust="spacingAndGlyphs" fill="#111" stroke="#111" stroke-width="0.3">Buy</text>
<text x="242.34" y="453.79" font-size="12.06" textLength="32.48" lengthAdjust="spacingAndGlyphs" fill="#111" stroke="#111" stroke-width="0.3">NVDA</text>
<text x="345.17" y="453.79" font-size="12.11" textLength="20.20" lengthAdjust="spacingAndGlyphs" fill="#111" stroke="#111" stroke-width="0.3">100</text>
<text x="437.11" y="453.79" font-size="12.11" textLength="43.76" lengthAdjust="spacingAndGlyphs" fill="#111" stroke="#111" stroke-width="0.3">$100.00</text>
<text x="520.35" y="453.79" font-size="12.11" textLength="37.03" lengthAdjust="spacingAndGlyphs" fill="#111" stroke="#111" stroke-width="0.3">$10.00</text>
<text x="699.64" y="453.79" font-size="12.11" textLength="6.73" lengthAdjust="spacingAndGlyphs" fill="#111" stroke="#111" stroke-width="0.3">0</text>
<text x="763.17" y="453.79" font-size="12.11" textLength="20.20" lengthAdjust="spacingAndGlyphs" fill="#111" stroke="#111" stroke-width="0.3">100</text>
<text x="799.48" y="453.79" font-size="12.11" textLength="60.59" lengthAdjust="spacingAndGlyphs" fill="#111" stroke="#111" stroke-width="0.3">$10,010.00</text>
<text x="906.58" y="453.79" font-size="12.11" textLength="30.29" lengthAdjust="spacingAndGlyphs" fill="#111" stroke="#111" stroke-width="0.3">$0.00</text>
<text x="1061.28" y="453.79" font-size="12.11" textLength="60.59" lengthAdjust="spacingAndGlyphs" fill="#111" stroke="#111" stroke-width="0.3">$10,010.00</text>
<text x="1140.91" y="453.79" font-size="12.11" textLength="43.76" lengthAdjust="spacingAndGlyphs" fill="#111" stroke="#111" stroke-width="0.3">$100.10</text>
<text x="78.68" y="471.92" font-size="12.11" textLength="6.73" lengthAdjust="spacingAndGlyphs" fill="#111" stroke="#111" stroke-width="0.3">5</text>
<text x="98.01" y="471.92" font-size="12.28" textLength="64.24" lengthAdjust="spacingAndGlyphs" fill="#111" stroke="#111" stroke-width="0.3">08-07-2023</text>
<text x="166.31" y="471.92" font-size="12.06" textLength="20.71" lengthAdjust="spacingAndGlyphs" fill="#111" stroke="#111" stroke-width="0.3">Buy</text>
<text x="243.28" y="471.92" font-size="12.06" textLength="29.61" lengthAdjust="spacingAndGlyphs" fill="#111" stroke="#111" stroke-width="0.3">AAPL</text>
<text x="351.91" y="471.92" font-size="12.11" textLength="13.47" lengthAdjust="spacingAndGlyphs" fill="#111" stroke="#111" stroke-width="0.3">50</text>
<text x="437.11" y="471.92" font-size="12.11" textLength="43.76" lengthAdjust="spacingAndGlyphs" fill="#111" stroke="#111" stroke-width="0.3">$280.00</text>
<text x="527.08" y="471.92" font-size="12.11" textLength="30.29" lengthAdjust="spacingAndGlyphs" fill="#111" stroke="#111" stroke-width="0.3">$5.00</text>
<text x="692.91" y="471.92" font-size="12.11" textLength="13.47" lengthAdjust="spacingAndGlyphs" fill="#111" stroke="#111" stroke-width="0.3">80</text>
<text x="763.17" y="471.92" font-size="12.11" textLength="20.20" lengthAdjust="spacingAndGlyphs" fill="#111" stroke="#111" stroke-width="0.3">130</text>
<text x="799.48" y="471.92" font-size="12.11" textLength="60.59" lengthAdjust="spacingAndGlyphs" fill="#111" stroke="#111" stroke-width="0.3">$14,005.00</text>
<text x="876.28" y="471.92" font-size="12.11" textLength="60.59" lengthAdjust="spacingAndGlyphs" fill="#111" stroke="#111" stroke-width="0.3">$24,004.00</text>
<text x="1061.28" y="471.92" font-size="12.11" textLength="60.59" lengthAdjust="spacingAndGlyphs" fill="#111" stroke="#111" stroke-width="0.3">$38,009.00</text>
<text x="1140.97" y="471.92" font-size="12.11" textLength="43.76" lengthAdjust="spacingAndGlyphs" fill="#111" stroke="#111" stroke-width="0.3">$292.38</text>
<text x="78.70" y="490.05" font-size="12.11" textLength="6.73" lengthAdjust="spacingAndGlyphs" fill="#111" stroke="#111" stroke-width="0.3">6</text>
<text x="98.01" y="490.05" font-size="12.28" textLength="64.24" lengthAdjust="spacingAndGlyphs" fill="#111" stroke="#111" stroke-width="0.3">08-07-2023</text>
<text x="166.76" y="490.05" font-size="12.06" textLength="19.84" lengthAdjust="spacingAndGlyphs" fill="#111" stroke="#111" stroke-width="0.3">Sell</text>
<text x="243.28" y="490.05" font-size="12.06" textLength="29.61" lengthAdjust="spacingAndGlyphs" fill="#111" stroke="#111" stroke-width="0.3">AAPL</text>
<text x="351.91" y="490.05" font-size="12.11" textLength="13.47" lengthAdjust="spacingAndGlyphs" fill="#111" stroke="#111" stroke-width="0.3">20</text>
<text x="437.11" y="490.05" font-size="12.11" textLength="43.76" lengthAdjust="spacingAndGlyphs" fill="#111" stroke="#111" stroke-width="0.3">$310.00</text>
<text x="527.08" y="490.05" font-size="12.11" textLength="30.29" lengthAdjust="spacingAndGlyphs" fill="#111" stroke="#111" stroke-width="0.3">$8.00</text>
<text x="686.17" y="490.05" font-size="12.11" textLength="20.20" lengthAdjust="spacingAndGlyphs" fill="#111" stroke="#111" stroke-width="0.3">130</text>
<text x="763.17" y="490.05" font-size="12.11" textLength="20.20" lengthAdjust="spacingAndGlyphs" fill="#111" stroke="#111" stroke-width="0.3">110</text>
<text x="806.22" y="490.05" font-size="12.11" textLength="53.86" lengthAdjust="spacingAndGlyphs" fill="#111" stroke="#111" stroke-width="0.3">$6,192.00</text>
<text x="876.28" y="490.05" font-size="12.11" textLength="60.59" lengthAdjust="spacingAndGlyphs" fill="#111" stroke="#111" stroke-width="0.3">$38,009.00</text>
<text x="975.20" y="490.05" font-size="12.11" textLength="53.86" lengthAdjust="spacingAndGlyphs" fill="#111" stroke="#111" stroke-width="0.3">$5,847.54</text>
<text x="1061.34" y="490.05" font-size="12.11" textLength="60.59" lengthAdjust="spacingAndGlyphs" fill="#111" stroke="#111" stroke-width="0.3">$32,161.46</text>
<text x="1140.97" y="490.05" font-size="12.11" textLength="43.76" lengthAdjust="spacingAndGlyphs" fill="#111" stroke="#111" stroke-width="0.3">$292.38</text>
<text x="78.78" y="508.18" font-size="12.11" textLength="6.73" lengthAdjust="spacingAndGlyphs" fill="#111" stroke="#111" stroke-width="0.3">7</text>
<text x="78.69" y="526.31" font-size="12.11" textLength="6.73" lengthAdjust="spacingAndGlyphs" fill="#111" stroke="#111" stroke-width="0.3">8</text>
<text x="78.74" y="544.44" font-size="12.11" textLength="6.73" lengthAdjust="spacingAndGlyphs" fill="#111" stroke="#111" stroke-width="0.3">9</text>
<text x="71.91" y="562.57" font-size="12.11" textLength="13.47" lengthAdjust="spacingAndGlyphs" fill="#111" stroke="#111" stroke-width="0.3">10</text>
<text x="72.03" y="580.70" font-size="12.11" textLength="13.47" lengthAdjust="spacingAndGlyphs" fill="#111" stroke="#111" stroke-width="0.3">11</text>
<text x="72.04" y="598.83" font-size="12.11" textLength="13.47" lengthAdjust="spacingAndGlyphs" fill="#111" stroke="#111" stroke-width="0.3">12</text>
</g>
<text x="83.13" y="607.70" font-size="12.21" textLength="64.62" lengthAdjust="spacingAndGlyphs" fill="#555">Instructions</text>
<text x="165.88" y="607.70" font-size="12.65" textLength="109.52" lengthAdjust="spacingAndGlyphs" fill="#217346" font-weight="bold">Input_transactions</text>
<text x="291.20" y="607.80" font-size="12.21" textLength="49.16" lengthAdjust="spacingAndGlyphs" fill="#555">Portfolio</text>
<text x="359.42" y="607.80" font-size="12.21" textLength="51.15" lengthAdjust="spacingAndGlyphs" fill="#555">Overview</text>
<text x="5.94" y="629.60" font-size="9.59" textLength="26.78" lengthAdjust="spacingAndGlyphs" fill="#444">Ready</text>
<text x="46.41" y="629.60" font-size="9.59" textLength="40.01" lengthAdjust="spacingAndGlyphs" fill="#444">Calculate</text>
<text x="150.38" y="629.60" font-size="9.59" textLength="103.34" lengthAdjust="spacingAndGlyphs" fill="#444">Accessibility: Investigate</text>
<text x="1168.00" y="629.80" font-size="10.61" textLength="25.04" lengthAdjust="spacingAndGlyphs" fill="#444">100%</text>
<path d="M760.4 519.3 L760.4 533.6 L763.7 530.6 L765.9 535.6 L768.6 534.6 L766.5 530.3 L771.1 530.3 Z" fill="#fff" stroke="#222" stroke-width="0.9" stroke-linejoin="miter"/>
</svg>
</body></html>
